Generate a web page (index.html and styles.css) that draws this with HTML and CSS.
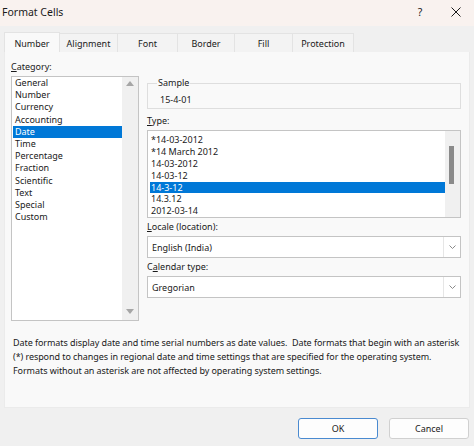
FILE: index.html
```html
<!DOCTYPE html>
<html lang="en">
<head>
<meta charset="utf-8">
<title>Format Cells</title>
<link rel="stylesheet" href="styles.css">
</head>
<body>
<div class="dialog">
  <header class="titlebar">
    <span class="title">Format Cells</span>
    <span class="help">?</span>
    <span class="close">
      <svg width="10" height="10" viewBox="0 0 10 10"><path d="M0.5 0.5 L9.5 9.5 M9.5 0.5 L0.5 9.5" stroke="#1a1a1a" stroke-width="1" fill="none"/></svg>
    </span>
  </header>

  <nav class="tabs">
    <span class="tab active">Number</span>
    <span class="tab">Alignment</span>
    <span class="tab">Font</span>
    <span class="tab">Border</span>
    <span class="tab">Fill</span>
    <span class="tab">Protection</span>
  </nav>

  <main class="panel">
    <div class="columns">
      <section class="col-left">
        <div class="label"><u>C</u>ategory:</div>
        <div class="listbox category">
          <ul class="items">
            <li>General</li>
            <li>Number</li>
            <li>Currency</li>
            <li>Accounting</li>
            <li class="selected">Date</li>
            <li>Time</li>
            <li>Percentage</li>
            <li>Fraction</li>
            <li>Scientific</li>
            <li>Text</li>
            <li>Special</li>
            <li>Custom</li>
          </ul>
          <div class="vscroll arrows">
            <svg class="arrow" width="8" height="5" viewBox="0 0 8 5"><path d="M0 5 L4 0 L8 5 Z" fill="#a6a6a6"/></svg>
            <svg class="arrow" width="8" height="5" viewBox="0 0 8 5"><path d="M0 0 L4 5 L8 0 Z" fill="#a6a6a6"/></svg>
          </div>
        </div>
      </section>

      <section class="col-right">
        <fieldset class="sample">
          <legend>Sample</legend>
          <div class="sample-value">15-4-01</div>
        </fieldset>

        <div class="label type-label"><u>T</u>ype:</div>
        <div class="listbox type">
          <ul class="items">
            <li>*14-03-2012</li>
            <li>*14 March 2012</li>
            <li>14-03-2012</li>
            <li>14-03-12</li>
            <li class="selected">14-3-12</li>
            <li>14.3.12</li>
            <li>2012-03-14</li>
          </ul>
          <div class="vscroll"><div class="thumb"></div></div>
        </div>

        <div class="label"><u>L</u>ocale (location):</div>
        <div class="combo">
          <span class="combo-text">English (India)</span>
          <span class="combo-btn"><svg width="7" height="4" viewBox="0 0 7 4"><path d="M0.5 0.5 L3.5 3.5 L6.5 0.5" stroke="#8a8a8a" stroke-width="1" fill="none"/></svg></span>
        </div>

        <div class="label cal-label">C<u>a</u>lendar type:</div>
        <div class="combo">
          <span class="combo-text">Gregorian</span>
          <span class="combo-btn"><svg width="7" height="4" viewBox="0 0 7 4"><path d="M0.5 0.5 L3.5 3.5 L6.5 0.5" stroke="#8a8a8a" stroke-width="1" fill="none"/></svg></span>
        </div>
      </section>
    </div>

    <p class="description">Date formats display date and time serial numbers as date values.&nbsp; Date formats that begin with an asterisk<br>(*) respond to changes in regional date and time settings that are specified for the operating system.<br>Formats without an asterisk are not affected by operating system settings.</p>
  </main>

  <footer class="footer">
    <button class="btn default">OK</button>
    <button class="btn">Cancel</button>
  </footer>
</div>
</body>
</html>
```

FILE: styles.css
```css
* { box-sizing: border-box; }

html, body {
  margin: 0;
  padding: 0;
}

body {
  width: 474px;
  height: 446px;
  overflow: hidden;
  background: #f0f0f0;
  font-family: "Noto Sans", "Open Sans", sans-serif;
  font-size: 9px;
  color: #1a1a1a;
}

.dialog {
  display: flex;
  flex-direction: column;
  height: 446px;
}

/* window caption */
.titlebar {
  height: 26px;
  display: flex;
  align-items: center;
  background: #f9f2ef;
  padding: 0 0 2px 2px;
  font-size: 10.5px;
}
.title { flex: 1; }
.help { width: 40px; text-align: center; margin-right: 4px; }
.close { width: 24px; display: flex; justify-content: center; margin-right: 6px; }

/* tab strip */
.tabs {
  display: flex;
  padding: 6px 0 0 4px;
  height: 26px;
}
.tab {
  height: 20px;
  margin-top: 1px;
  display: flex;
  align-items: center;
  justify-content: center;
  background: #f3f3f3;
  border: 1px solid #e3e3e3;
  border-bottom: none;
  border-left: none;
}
.tab:nth-child(1) { width: 56px; }
.tab:nth-child(2) { width: 58px; }
.tab:nth-child(3) { width: 60px; }
.tab:nth-child(4) { width: 57px; }
.tab:nth-child(5) { width: 58px; }
.tab:nth-child(6) { width: 61px; }
.tab.active {
  background: #f9f9f9;
  height: 21px;
  margin-top: 0;
  border: 1px solid #e3e3e3;
  border-bottom: none;
}

/* page body */
.panel {
  margin: 0 4px;
  height: 356px;
  background: #f9f9f9;
  border: 1px solid #ebebeb;
  border-top: none;
  padding: 8px 0 0 6px;
  display: flex;
  flex-direction: column;
}

.columns {
  display: flex;
  gap: 8px;
}
.col-left { width: 128px; }
.col-right { width: 314px; }

.label {
  height: 16px;
  line-height: 14px;
}
.label u { text-decoration-thickness: 1px; text-underline-offset: 1px; }

.listbox {
  background: #fff;
  border: 1px solid #c4c4c4;
  display: flex;
}
.items {
  list-style: none;
  margin: 0;
  padding: 0;
  flex: 1;
}
.items li {
  height: 12.2px;
  line-height: 12px;
  padding-left: 2px;
  white-space: nowrap;
}
.items li.selected {
  background: #0078d7;
  color: #fff;
}

.category { height: 245px; }
.category .items { padding: 0 0 0 1px; }
.category .items li { padding-left: 2px; }

.vscroll {
  width: 16px;
  background: #f0f0f0;
  position: relative;
}
.vscroll.arrows {
  display: flex;
  flex-direction: column;
  justify-content: space-between;
  align-items: center;
  padding: 4px 0 6px;
}

.sample {
  margin: 17px 0 0 0;
  padding: 5px 10px 2px 12px;
  border: 1px solid #dedede;
}
.sample legend {
  padding: 0 1px;
  margin-left: -3px;
  line-height: 12px;
}
.sample-value { line-height: 12px; }

.type-label { margin-top: 5px; }
.type { height: 88px; }
.type .items { padding: 3px 0 0 2px; }
.type .items li { height: 11.9px; line-height: 12px; padding-left: 1px; }
.type .vscroll { width: 15px; }
.thumb {
  position: absolute;
  left: 4px;
  top: 15px;
  width: 5px;
  height: 38px;
  background: #8a8a8a;
}

.combo {
  height: 22px;
  background: #fff;
  border: 1px solid #c4c4c4;
  display: flex;
  align-items: center;
}
.combo-text { flex: 1; padding-left: 4px; }
.combo-btn {
  width: 17px;
  height: 100%;
  border-left: 1px solid #e6e6e6;
  display: flex;
  align-items: center;
  justify-content: center;
}
.col-right .label:not(.type-label) { margin-top: 2px; }
.col-right .cal-label { margin-top: 1px; }

.description {
  margin: auto 4px 29px 2px;
  line-height: 14px;
  letter-spacing: -0.07px;
  white-space: nowrap;
}

/* button row */
.footer {
  flex: 1;
  display: flex;
  justify-content: flex-end;
  align-items: flex-start;
  gap: 11px;
  padding: 10px 5px 0 0;
}
.btn {
  width: 80px;
  height: 21px;
  font: inherit;
  color: #1a1a1a;
  background: #fdfdfd;
  border: 1px solid #d0d0d0;
  border-radius: 3px;
  padding: 0;
}
.btn.default {
  border: 1px solid #4a8ad0;
}
```
